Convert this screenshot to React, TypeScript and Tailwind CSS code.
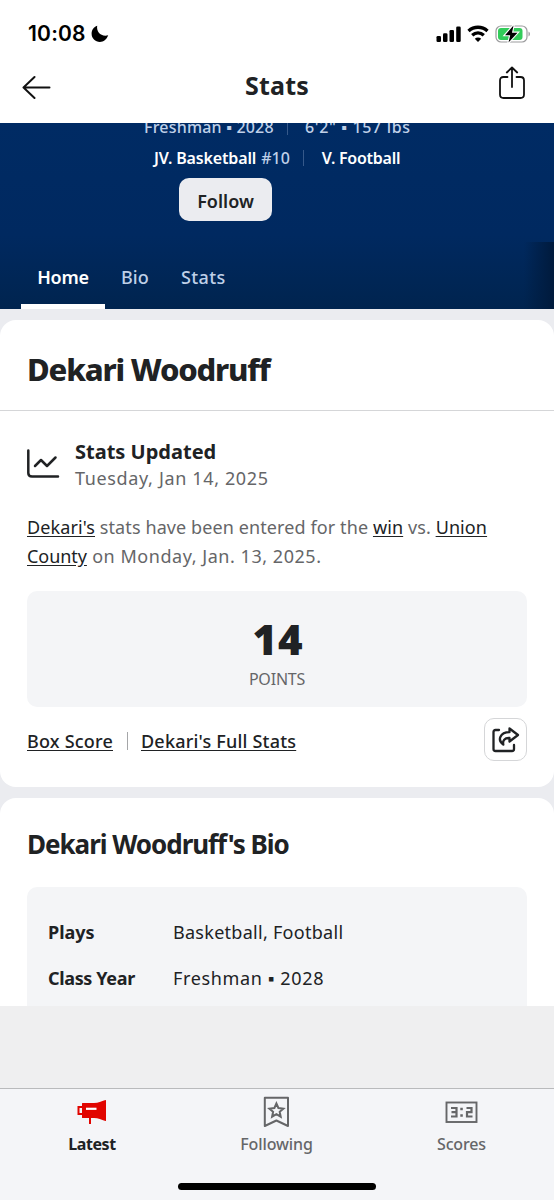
import React from "react";

function StatusBar() {
  return (
    <div className="flex h-[54px] items-center pt-[13px] pl-[28px] pr-[23px] text-black">
      <span className="font-['Inter'] text-[21px] font-semibold leading-none tracking-[0.2px]">10:08</span>
      <svg className="ml-[5px]" width="18" height="18" viewBox="0 0 18 18">
        <path d="M6.200 0.800C5.200 7 10 12 17.200 10.300C15.500 14.800 12.500 16.900 8.900 16.900C4.200 16.900 0.600 13.400 0.600 8.800C0.600 5 2.800 1.900 6.200 0.800Z" fill="currentColor" />
      </svg>
      <div className="ml-auto flex items-center gap-[6px]">
        <svg width="25" height="18" viewBox="0 0 25 18" fill="currentColor">
          <rect x="0.500" y="11" width="4.500" height="6" rx="1.300" />
          <rect x="7" y="8.200" width="4.500" height="8.800" rx="1.300" />
          <rect x="13.500" y="5" width="4.500" height="12" rx="1.300" />
          <rect x="20.200" y="1.500" width="4.500" height="15.500" rx="1.300" />
        </svg>
        <svg width="22" height="18" viewBox="0 0 22 18" fill="none" stroke="currentColor" strokeWidth="3.300">
          <path d="M1.500 6C7 1 15 1 20.500 6" />
          <path d="M5.200 10.300C8.600 7.200 13.400 7.200 16.800 10.300" />
          <path d="M11 17L7.800 13.700C9.700 12.200 12.300 12.200 14.200 13.700Z" fill="currentColor" stroke="none" />
        </svg>
        <svg width="36" height="20" viewBox="0 0 36 20">
          <rect x="1" y="2" width="31" height="16" rx="5" fill="none" stroke="#9c9c9e" strokeWidth="1.200" />
          <rect x="3" y="4" width="24.500" height="12" rx="3" fill="#32cc5a" />
          <path d="M33.500 7.500C35.500 8.500 35.500 11.500 33.500 12.500Z" fill="#9c9c9e" />
          <path d="M18.500 1.500L10 11.200H15.200L13.500 18.500L22.500 8.700H17Z" fill="black" stroke="white" strokeWidth="2.200" paintOrder="stroke" />
        </svg>
      </div>
    </div>
  );
}

function Header() {
  return (
    <header className="h-[123px] shrink-0 bg-white">
      <StatusBar />
      <div className="grid h-[65px] grid-cols-[60px_1fr_60px] items-center">
        <svg className="ml-[22px]" width="30" height="24" viewBox="0 0 30 24" fill="none" stroke="#111" strokeWidth="2" strokeLinecap="round" strokeLinejoin="round">
          <path d="M27.500 12.500H1.500M12.500 2L1.500 12.500L12.500 23" />
        </svg>
        <h1 className="pb-[3px] text-center text-[25px] font-bold leading-8 tracking-[0.2px]">Stats</h1>
        <svg className="mb-[7px] ml-[4px]" width="28" height="34" viewBox="0 0 28 34" fill="none" stroke="#111" strokeWidth="1.800" strokeLinecap="round" strokeLinejoin="round">
          <path d="M9.500 11H5.500Q2 11 2 14.500V28.500Q2 32 5.500 32H22.500Q26 32 26 28.500V14.500Q26 11 22.500 11H18.500M14 21V1.500M8.800 6.500L14 1.500L19.200 6.500" />
        </svg>
      </div>
    </header>
  );
}

function Hero() {
  return (
    <section className="relative h-[186px] shrink-0 overflow-hidden bg-linear-to-b from-[#002b64] via-[#002960] via-60% to-[#00244f] text-[#bfd0e8]">
      <div className="-mt-[8px] flex h-[24px] items-center pl-[144px] text-[16px] font-medium">
        <span className="w-[143px] tracking-[0.2px]">Freshman ▪ 2028</span>
        <span className="h-[16px] w-px bg-[#36598a]" />
        <span className="ml-[17px] tracking-[0.65px]">6'2" ▪ 157 lbs</span>
      </div>
      <div className="mt-[7px] flex h-[24px] items-center pl-[154px] text-[16px] font-semibold text-white">
        <span className="tracking-[-0.15px]">JV. Basketball</span>
        <span className="ml-[5px] font-medium text-[#bfd0e8]">#10</span>
        <span className="ml-[13px] h-[16px] w-px bg-[#36598a]" />
        <span className="ml-[18px] tracking-[-0.25px]">V. Football</span>
      </div>
      <button className="ml-[179px] mt-[8px] flex h-[43px] w-[93px] items-center justify-center rounded-[10px] bg-[#ebecf0] pt-[3px] text-[18px] font-semibold text-[#202224]">Follow</button>
      <nav className="mt-[26px] flex h-[62px] pl-[21px] text-[18px] font-medium leading-[61px]">
        <a className="w-[84px] border-b-[5px] border-white text-center font-semibold tracking-[-0.2px] text-white">Home</a>
        <a className="ml-[16px] w-[29px]">Bio</a>
        <a className="ml-[31px] tracking-[0.4px]">Stats</a>
      </nav>
      <div className="absolute bottom-0 right-0 h-[67px] w-[30px] bg-linear-to-r from-transparent to-[#001a3c]" />
    </section>
  );
}

function StatsCard() {
  return (
    <section className="h-[467px] shrink-0 rounded-[16px] bg-white">
      <div className="flex h-[91px] items-center border-b border-[#d5d6d8] pl-[27px] pt-[8px]">
        <h2 className="text-[31px] font-extrabold leading-10 tracking-[-1.2px]">Dekari Woodruff</h2>
      </div>
      <div className="px-[27px]">
        <div className="flex pt-[28px]">
          <svg className="mt-[10px]" width="34" height="30" viewBox="0 0 34 30" fill="none" stroke="#202224" strokeWidth="2.500" strokeLinecap="round" strokeLinejoin="round">
            <path d="M1.300 1.500V24Q1.300 27.500 5 27.500H31M8 17L14 11L20 17L28.500 8.500" />
          </svg>
          <div className="ml-[14px]">
            <h3 className="text-[20px] font-bold leading-[26px]">Stats Updated</h3>
            <p className="text-[18px] leading-[27px] tracking-[0.64px] text-[#656668]">Tuesday, Jan 14, 2025</p>
          </div>
        </div>
        <p className="mt-[21px] whitespace-nowrap text-[18px] leading-[29px] tracking-[0.1px] text-[#656668]">
          <a className="text-[#202224] underline underline-offset-2">Dekari's</a> stats have been entered for the <a className="text-[#202224] underline underline-offset-2">win</a> vs. <a className="text-[#202224] underline underline-offset-2">Union<br /><span className="tracking-[-0.05px]">County</span></a><span className="tracking-[0.54px]"> on Monday, Jan. 13, 2025.</span>
        </p>
        <div className="mt-[20px] flex h-[116px] flex-col items-center rounded-[10px] bg-[#f4f5f7] pt-[23px]">
          <strong className="pl-[2px] text-[42px] font-black leading-[49px] tracking-[0.8px]">14</strong>
          <span className="mt-[4px] text-[16px] leading-6 tracking-[-0.2px] text-[#656668]">POINTS</span>
        </div>
        <div className="mt-[11px] flex h-[43px] items-center text-[18px] font-medium tracking-[0.2px]">
          <a className="pt-[3px] underline underline-offset-2">Box Score</a>
          <span className="mx-[13.500px] mt-[3px] h-[18px] w-px bg-[#a5a6a8]" />
          <a className="pt-[3px] underline underline-offset-2">Dekari's Full Stats</a>
          <button className="ml-auto flex h-[43px] w-[43px] items-center justify-center rounded-[10px] border border-[#d5d6d8]">
            <svg width="28" height="26" viewBox="0 0 28 26" fill="none" stroke="#202224" strokeWidth="2.300" strokeLinecap="round" strokeLinejoin="round">
              <path d="M7 3H3.500Q1.500 3 1.500 5V22Q1.500 24 3.500 24H20Q22 24 22 22V18" />
              <path d="M17.500 1.500L26 8L17.500 14.500V11C12.500 10.700 10.500 13.500 11.300 17.500C5 13 8 5.200 17.500 5.200Z" />
            </svg>
          </button>
        </div>
      </div>
    </section>
  );
}

function BioCard() {
  return (
    <section className="mt-[11px] h-[208px] shrink-0 overflow-hidden rounded-t-[16px] bg-white px-[27px] pt-[28px]">
      <h2 className="text-[26px] font-bold leading-9 tracking-[-1.03px]">Dekari Woodruff's Bio</h2>
      <dl className="mt-[25px] grid h-[130px] grid-cols-[125px_1fr] content-start rounded-t-[10px] bg-[#f4f5f7] pl-[21px] pt-[22px] text-[18px] leading-[46px]">
        <dt className="font-bold">Plays</dt>
        <dd className="tracking-[0.28px]">Basketball, Football</dd>
        <dt className="font-bold tracking-[-0.35px]">Class Year</dt>
        <dd className="tracking-[0.66px]">Freshman ▪ 2028</dd>
      </dl>
    </section>
  );
}

function TabBar() {
  return (
    <footer className="h-[112px] shrink-0 border-t border-[#b9babc] bg-[#f4f5f8]">
      <div className="grid h-[68px] grid-cols-[184px_185px_185px] text-center text-[16px] font-medium text-[#656668]">
        <div className="flex flex-col items-center">
          <svg className="mt-[7px]" width="34" height="32" viewBox="0 0 34 32">
            <path d="M7 7.500Q7 7 7.500 7H19C23.500 7 26 5.500 30.500 4Q31 4 31 4.500V24.500Q31 25 30.500 25C26 23.500 23.500 22 19 22H7.500Q7 22 7 21.500Z" fill="#e10500" />
            <path d="M7.500 11H3.500V18H7.500M15 21V28" fill="none" stroke="#e10500" strokeWidth="2" />
            <path d="M11 12.800H21.500" stroke="white" strokeWidth="2.200" />
          </svg>
          <span className="mt-[4px] leading-6 font-bold tracking-[-0.4px] text-[#202224]">Latest</span>
        </div>
        <div className="flex flex-col items-center">
          <svg className="mt-[7px]" width="30" height="32" viewBox="0 0 30 32" fill="none" stroke="#656668" strokeWidth="2">
            <path d="M2.800 1.800H26V30L14.400 24.500L2.800 30Z" strokeLinejoin="round" />
            <path d="M14.400 7.500L16.400 12L21.400 12.600L17.700 15.800L18.700 20.700L14.400 18.200L10.100 20.700L11.100 15.800L7.400 12.600L12.400 12Z" />
          </svg>
          <span className="mt-[4px] leading-6 tracking-[-0.1px]">Following</span>
        </div>
        <div className="flex flex-col items-center">
          <svg className="mt-[7px]" width="34" height="32" viewBox="0 0 34 32" fill="none" stroke="#656668" strokeWidth="1.900">
            <rect x="1.500" y="6.500" width="30" height="19.500" />
            <path d="M6 12H11.500V20.500H6M6.500 16.200H11.500M21.500 12H26.500V16.200H22V20.500H27.500" strokeWidth="2.200" />
            <path d="M15.300 13H17.800M15.300 19.500H17.800" strokeWidth="2.500" />
          </svg>
          <span className="mt-[4px] leading-6 tracking-[-0.15px]">Scores</span>
        </div>
      </div>
      <div className="mx-auto mt-[26px] h-[7px] w-[198px] rounded-full bg-black" />
    </footer>
  );
}

export default function App() {
  return (
    <div className="flex h-[1200px] w-[554px] flex-col overflow-hidden bg-[#ebecf0] font-['Noto_Sans',sans-serif] text-[#202224]">
      <Header />
      <Hero />
      <main className="flex flex-col pt-[11px]">
        <StatsCard />
        <BioCard />
      </main>
      <div className="h-[82px] shrink-0 bg-[#efeff0]" />
      <TabBar />
    </div>
  );
}
